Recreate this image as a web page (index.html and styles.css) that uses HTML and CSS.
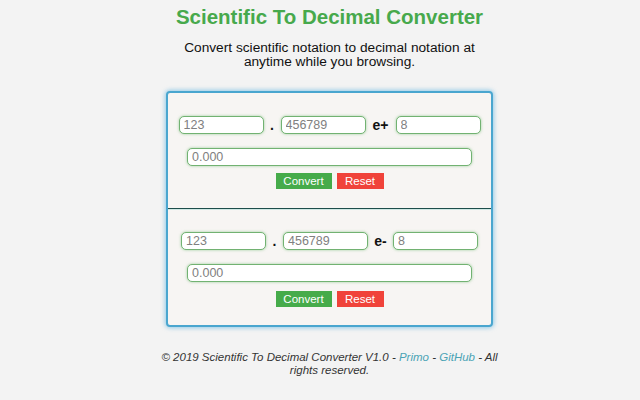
FILE: index.html
```html
<!DOCTYPE html>
<html>
<head>
<meta charset="utf-8">
<link rel="stylesheet" href="styles.css">
</head>
<body>
<div class="page">
  <h1 class="title">Scientific To Decimal Converter</h1>
  <p class="subtitle">Convert scientific notation to decimal notation at<br>anytime while you browsing.</p>
  <div class="card">
    <div class="section first">
      <div class="row">
        <input class="field" type="text" value="123">
        <span class="sep dot">.</span>
        <input class="field" type="text" value="456789">
        <span class="sep exp">e+</span>
        <input class="field" type="text" value="8">
      </div>
      <input class="result" type="text" value="0.000">
      <div class="buttons">
        <button class="btn convert">Convert</button>
        <button class="btn reset">Reset</button>
      </div>
    </div>
    <div class="section second">
      <div class="row">
        <input class="field" type="text" value="123">
        <span class="sep dot">.</span>
        <input class="field" type="text" value="456789">
        <span class="sep exp minus">e-</span>
        <input class="field" type="text" value="8">
      </div>
      <input class="result" type="text" value="0.000">
      <div class="buttons">
        <button class="btn convert">Convert</button>
        <button class="btn reset">Reset</button>
      </div>
    </div>
  </div>
  <p class="footer">© 2019 Scientific To Decimal Converter V1.0 - <a href="#">Primo</a> - <a href="#">GitHub</a> - All rights reserved.</p>
</div>
</body>
</html>
```
FILE: styles.css
```css
html, body {
  margin: 0;
  padding: 0;
  background: #f3f3f3;
  font-family: "Liberation Sans", Arial, sans-serif;
}
.page {
  width: 621px;
  padding-left: 19px;
  display: flex;
  flex-direction: column;
  align-items: center;
}
.title {
  margin: 5px 0 0;
  font-size: 20.5px;
  line-height: 24px;
  font-weight: bold;
  color: #47a94c;
  text-align: center;
}
.subtitle {
  margin: 12px 0 0;
  font-size: 13.7px;
  line-height: 13.5px;
  color: #111;
  text-align: center;
}
.card {
  margin-top: 23px;
  width: 323px;
  border: 2px solid #4aa6cf;
  border-radius: 4px;
  background: #f7f5f3;
  box-shadow: 0 0 4px 1px rgba(70, 170, 220, 0.55);
}
.section {
  display: flex;
  flex-direction: column;
  align-items: center;
}
.section.first {
  padding: 23px 0 19px;
  border-bottom: 1px solid #1d4d4a;
  box-shadow: 0 1px 0 #cfe8e4;
}
.section.second {
  padding: 23px 0 18px;
}
.row {
  display: flex;
  align-items: center;
  height: 18px;
}
.field, .result {
  box-sizing: border-box;
  height: 18px;
  border: 1.5px solid #72b272;
  border-radius: 5px;
  background: #fff;
  box-shadow: 0 0 3px rgba(100, 180, 100, 0.6);
  font-family: "Liberation Sans", Arial, sans-serif;
  font-size: 12.5px;
  color: #808080;
  padding: 0 4px;
  outline: none;
}
.field {
  width: 85px;
}
.sep {
  font-size: 14px;
  font-weight: bold;
  color: #111;
}
.dot {
  width: 17px;
  text-align: center;
}
.exp {
  width: 30px;
  text-align: center;
}
.exp.minus {
  width: 25px;
}
.result {
  margin-top: 14px;
  width: 285px;
}
.buttons {
  display: flex;
  gap: 5px;
  margin-top: 7px;
}
.second .buttons {
  margin-top: 9px;
}
.btn {
  height: 16px;
  border: none;
  padding: 0;
  font-family: "Liberation Sans", Arial, sans-serif;
  font-size: 11.5px;
  color: #fff;
  cursor: pointer;
}
.convert {
  background: #46ab4a;
  width: 56px;
}
.reset {
  background: #f0433a;
  width: 47px;
}
.footer {
  margin: 24px 0 0;
  width: 350px;
  font-size: 11.5px;
  line-height: 13px;
  font-style: italic;
  color: #333;
  text-align: center;
}
.footer a {
  color: #4aa3b5;
  text-decoration: none;
}
```
